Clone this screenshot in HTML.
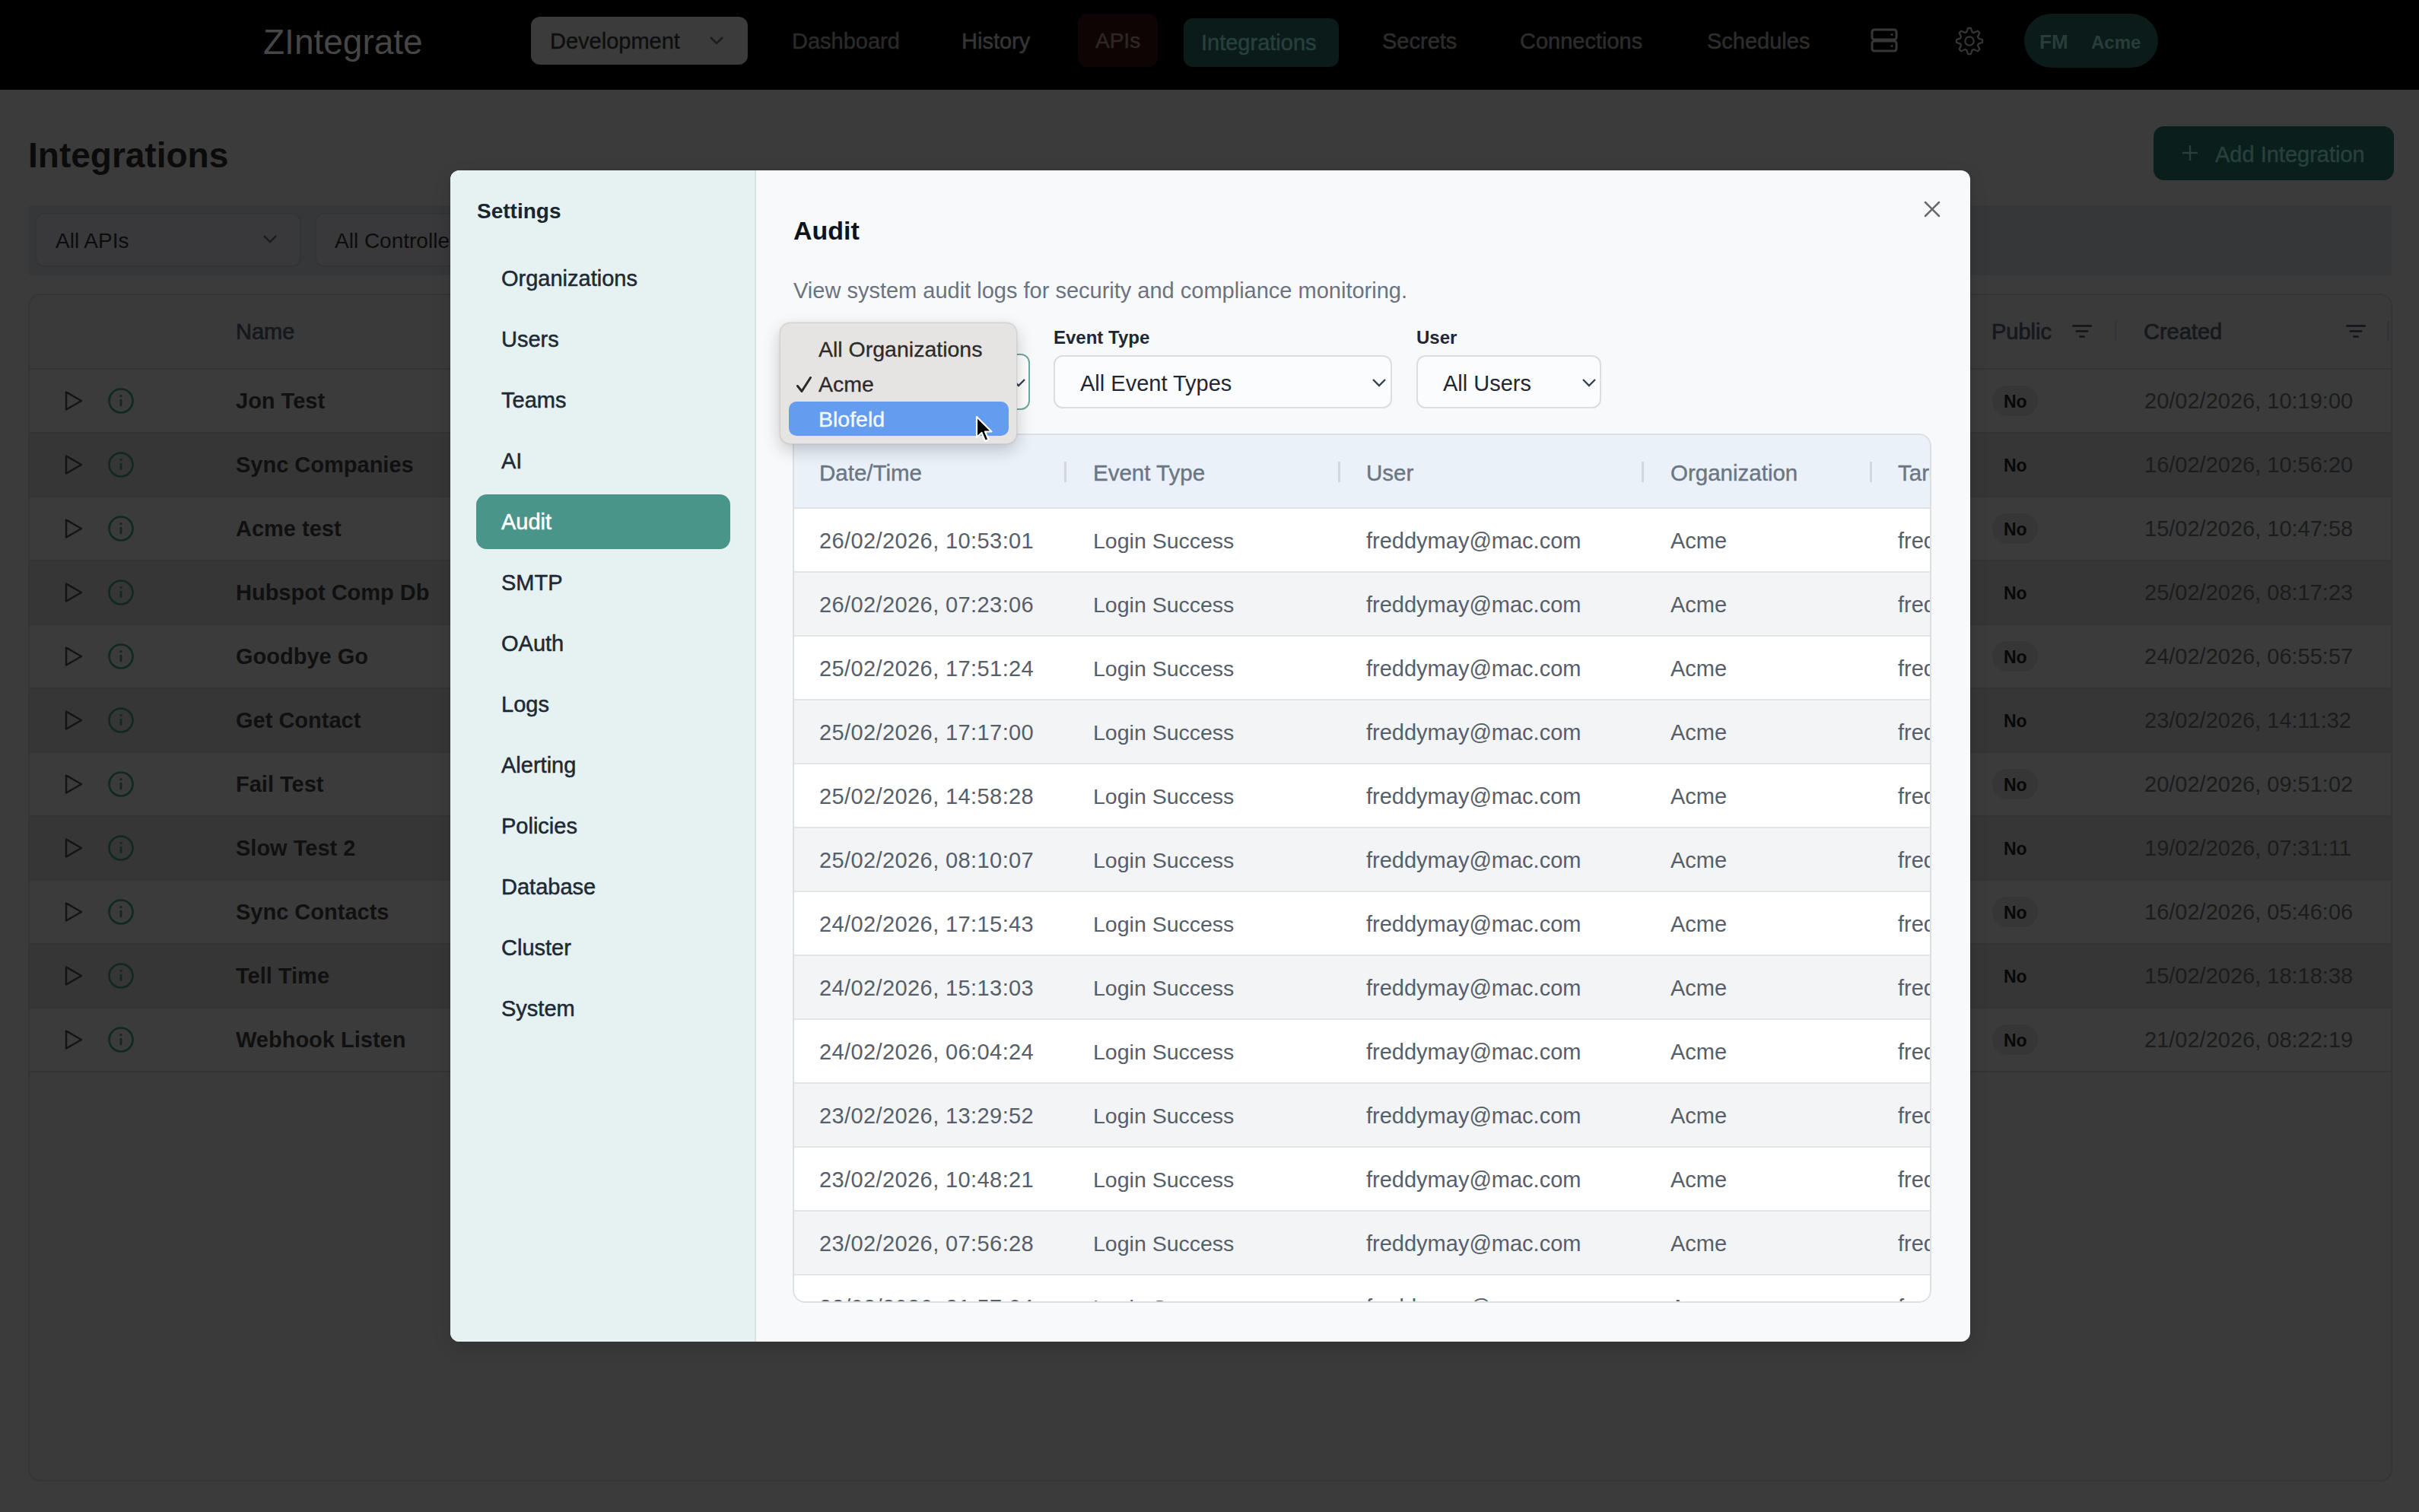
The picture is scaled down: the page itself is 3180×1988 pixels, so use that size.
<!DOCTYPE html>
<html><head><meta charset="utf-8"><style>
html,body{margin:0;padding:0;}
body{width:3180px;height:1988px;overflow:hidden;position:relative;background:#3b3b3b;font-family:"Liberation Sans",sans-serif;}
.t{position:absolute;white-space:nowrap;line-height:1;}
.b{position:absolute;}
</style></head><body>
<div class="b" style="left:0px;top:0px;width:3180px;height:118px;background:#000;"></div>
<div class="t" style="left:346px;top:32.1px;font-size:46px;color:#464646;">ZIntegrate</div>
<div class="b" style="left:698px;top:22px;width:285px;height:63px;background:#3b3b3b;border-radius:12px;"></div>
<div class="t" style="left:723px;top:39.5px;font-size:29px;color:#0e0e0e;-webkit-text-stroke:0.35px #0e0e0e;">Development</div>
<svg class="b" style="left:932px;top:46px" width="20" height="14" viewBox="0 0 20 14"><path d="M2 3 L10 11 L18 3" fill="none" stroke="#1c1c1c" stroke-width="2.6"/></svg>
<div class="t" style="left:1041px;top:39.5px;font-size:29px;color:#2a2a2a;-webkit-text-stroke:0.5px #2a2a2a;">Dashboard</div>
<div class="t" style="left:1264px;top:39.5px;font-size:29px;color:#363636;-webkit-text-stroke:0.5px #363636;">History</div>
<div class="b" style="left:1417px;top:18px;width:105px;height:70px;background:#0f0404;border-radius:12px;"></div>
<div class="t" style="left:1440px;top:40.3px;font-size:28px;color:#2e2626;-webkit-text-stroke:0.5px #2e2626;">APIs</div>
<div class="b" style="left:1556px;top:24px;width:204px;height:64px;background:#0a1b19;border-radius:12px;"></div>
<div class="t" style="left:1579px;top:41.5px;font-size:29px;color:#28403d;-webkit-text-stroke:0.5px #28403d;">Integrations</div>
<div class="t" style="left:1817px;top:39.5px;font-size:29px;color:#2d2d2d;-webkit-text-stroke:0.5px #2d2d2d;">Secrets</div>
<div class="t" style="left:1998px;top:39.5px;font-size:29px;color:#2d2d2d;-webkit-text-stroke:0.5px #2d2d2d;">Connections</div>
<div class="t" style="left:2244px;top:39.5px;font-size:29px;color:#2d2d2d;-webkit-text-stroke:0.5px #2d2d2d;">Schedules</div>
<svg class="b" style="left:2458px;top:36px" width="38" height="36" viewBox="0 0 38 36"><rect x="3" y="3" width="32" height="13" rx="3" fill="none" stroke="#363636" stroke-width="3"/><rect x="3" y="18" width="32" height="13" rx="3" fill="none" stroke="#363636" stroke-width="3"/><circle cx="29" cy="9.5" r="1.6" fill="#363636"/><circle cx="29" cy="24.5" r="1.6" fill="#363636"/></svg>
<svg class="b" style="left:2569px;top:34px" width="40" height="40" viewBox="0 0 40 40"><path fill="none" stroke="#363636" stroke-width="2.2" stroke-linejoin="round" d="M16.37 8.14 L18.20 2.89 L21.80 2.89 L23.63 8.14 L25.82 9.05 L30.82 6.63 L33.37 9.18 L30.95 14.18 L31.86 16.37 L37.11 18.20 L37.11 21.80 L31.86 23.63 L30.95 25.82 L33.37 30.82 L30.82 33.37 L25.82 30.95 L23.63 31.86 L21.80 37.11 L18.20 37.11 L16.37 31.86 L14.18 30.95 L9.18 33.37 L6.63 30.82 L9.05 25.82 L8.14 23.63 L2.89 21.80 L2.89 18.20 L8.14 16.37 L9.05 14.18 L6.63 9.18 L9.18 6.63 L14.18 9.05 Z"/><circle cx="20" cy="20" r="5.7" fill="none" stroke="#363636" stroke-width="2.2"/></svg>
<div class="b" style="left:2661px;top:18px;width:176px;height:71px;background:#0a1b19;border-radius:36px;"></div>
<div class="t" style="left:2681px;top:42.0px;font-size:26px;color:#283d3a;font-weight:700;">FM</div>
<div class="t" style="left:2749px;top:43.7px;font-size:24px;color:#283d3a;font-weight:700;">Acme</div>
<div class="t" style="left:37px;top:181.1px;font-size:46px;color:#0b0b0b;font-weight:700;">Integrations</div>
<div class="b" style="left:2831px;top:166px;width:316px;height:71px;background:#0a1e1b;border-radius:14px;"></div>
<svg class="b" style="left:2868px;top:190px" width="22" height="22" viewBox="0 0 22 22"><path d="M11 1V21M1 11H21" stroke="#27403d" stroke-width="2.4"/></svg>
<div class="t" style="left:2912px;top:188.5px;font-size:29px;color:#27403d;-webkit-text-stroke:0.5px #27403d;">Add Integration</div>
<div class="b" style="left:37px;top:270px;width:3107px;height:92px;background:#363739;border-radius:4px;"></div>
<div class="b" style="left:46px;top:280px;width:350px;height:71px;background:#39393b;border:2px solid #333436;border-radius:12px;box-sizing:border-box;"></div>
<div class="t" style="left:73px;top:303.3px;font-size:28px;color:#0c0c0c;">All APIs</div>
<svg class="b" style="left:345px;top:307px" width="20" height="14" viewBox="0 0 20 14"><path d="M2 3 L10 11 L18 3" fill="none" stroke="#1a1a1a" stroke-width="2.4"/></svg>
<div class="b" style="left:414px;top:280px;width:350px;height:71px;background:#39393b;border:2px solid #333436;border-radius:12px;box-sizing:border-box;"></div>
<div class="t" style="left:440px;top:303.3px;font-size:28px;color:#0c0c0c;">All Controllers</div>
<div class="b" style="left:37px;top:386px;width:3108px;height:1562px;background:#3a3a3b;border:2px solid #353536;border-radius:16px;box-sizing:border-box;"></div>
<div class="t" style="left:310px;top:421.5px;font-size:29px;color:#15181c;-webkit-text-stroke:0.7px #15181c;">Name</div>
<div class="t" style="left:2618px;top:421.5px;font-size:29px;color:#15181c;-webkit-text-stroke:0.7px #15181c;">Public</div>
<div class="t" style="left:2818px;top:421.5px;font-size:29px;color:#15181c;-webkit-text-stroke:0.7px #15181c;">Created</div>
<svg class="b" style="left:2723px;top:426px" width="28" height="20" viewBox="0 0 28 20"><path d="M2.5 2.5H25.5M7 9.5H21M11.5 16.5H16.5" stroke="#17191c" stroke-width="3" stroke-linecap="round"/></svg>
<svg class="b" style="left:3083px;top:426px" width="28" height="20" viewBox="0 0 28 20"><path d="M2.5 2.5H25.5M7 9.5H21M11.5 16.5H16.5" stroke="#17191c" stroke-width="3" stroke-linecap="round"/></svg>
<div class="b" style="left:2780px;top:422px;width:3px;height:26px;background:#333437;"></div>
<div class="b" style="left:3138px;top:422px;width:3px;height:26px;background:#333437;"></div>
<div class="b" style="left:39px;top:484px;width:3104px;height:2px;background:#333436;"></div>
<div class="b" style="left:39px;top:486px;width:3104px;height:82px;background:#3b3b3b;"></div>
<div class="b" style="left:39px;top:568px;width:3104px;height:2px;background:#343434;"></div>
<svg class="b" style="left:84px;top:513px" width="26" height="28" viewBox="0 0 26 28"><path d="M3 2.5 L23 14 L3 25.5 Z" fill="none" stroke="#141414" stroke-width="2.5" stroke-linejoin="round"/></svg>
<svg class="b" style="left:141px;top:509px" width="36" height="36" viewBox="0 0 36 36"><circle cx="18" cy="18" r="15.5" fill="none" stroke="#10291f" stroke-width="2.6"/><path d="M18 16V25" stroke="#10291f" stroke-width="2.6"/><circle cx="18" cy="11.5" r="1.6" fill="#10291f"/></svg>
<div class="t" style="left:310px;top:512.5px;font-size:29px;color:#101010;font-weight:700;">Jon Test</div>
<div class="b" style="left:2619px;top:507px;width:60px;height:40px;background:#363636;border-radius:20px;"></div>
<div class="t" style="left:2634px;top:516.5px;font-size:23px;color:#080808;font-weight:700;">No</div>
<div class="t" style="left:2819px;top:512.5px;font-size:29px;color:#1c1c1c;">20/02/2026, 10:19:00</div>
<div class="b" style="left:39px;top:570px;width:3104px;height:82px;background:#363636;"></div>
<div class="b" style="left:39px;top:652px;width:3104px;height:2px;background:#343434;"></div>
<svg class="b" style="left:84px;top:597px" width="26" height="28" viewBox="0 0 26 28"><path d="M3 2.5 L23 14 L3 25.5 Z" fill="none" stroke="#141414" stroke-width="2.5" stroke-linejoin="round"/></svg>
<svg class="b" style="left:141px;top:593px" width="36" height="36" viewBox="0 0 36 36"><circle cx="18" cy="18" r="15.5" fill="none" stroke="#10291f" stroke-width="2.6"/><path d="M18 16V25" stroke="#10291f" stroke-width="2.6"/><circle cx="18" cy="11.5" r="1.6" fill="#10291f"/></svg>
<div class="t" style="left:310px;top:596.5px;font-size:29px;color:#101010;font-weight:700;">Sync Companies</div>
<div class="t" style="left:2634px;top:600.5px;font-size:23px;color:#080808;font-weight:700;">No</div>
<div class="t" style="left:2819px;top:596.5px;font-size:29px;color:#1c1c1c;">16/02/2026, 10:56:20</div>
<div class="b" style="left:39px;top:654px;width:3104px;height:82px;background:#3b3b3b;"></div>
<div class="b" style="left:39px;top:736px;width:3104px;height:2px;background:#343434;"></div>
<svg class="b" style="left:84px;top:681px" width="26" height="28" viewBox="0 0 26 28"><path d="M3 2.5 L23 14 L3 25.5 Z" fill="none" stroke="#141414" stroke-width="2.5" stroke-linejoin="round"/></svg>
<svg class="b" style="left:141px;top:677px" width="36" height="36" viewBox="0 0 36 36"><circle cx="18" cy="18" r="15.5" fill="none" stroke="#10291f" stroke-width="2.6"/><path d="M18 16V25" stroke="#10291f" stroke-width="2.6"/><circle cx="18" cy="11.5" r="1.6" fill="#10291f"/></svg>
<div class="t" style="left:310px;top:680.5px;font-size:29px;color:#101010;font-weight:700;">Acme test</div>
<div class="b" style="left:2619px;top:675px;width:60px;height:40px;background:#363636;border-radius:20px;"></div>
<div class="t" style="left:2634px;top:684.5px;font-size:23px;color:#080808;font-weight:700;">No</div>
<div class="t" style="left:2819px;top:680.5px;font-size:29px;color:#1c1c1c;">15/02/2026, 10:47:58</div>
<div class="b" style="left:39px;top:738px;width:3104px;height:82px;background:#363636;"></div>
<div class="b" style="left:39px;top:820px;width:3104px;height:2px;background:#343434;"></div>
<svg class="b" style="left:84px;top:765px" width="26" height="28" viewBox="0 0 26 28"><path d="M3 2.5 L23 14 L3 25.5 Z" fill="none" stroke="#141414" stroke-width="2.5" stroke-linejoin="round"/></svg>
<svg class="b" style="left:141px;top:761px" width="36" height="36" viewBox="0 0 36 36"><circle cx="18" cy="18" r="15.5" fill="none" stroke="#10291f" stroke-width="2.6"/><path d="M18 16V25" stroke="#10291f" stroke-width="2.6"/><circle cx="18" cy="11.5" r="1.6" fill="#10291f"/></svg>
<div class="t" style="left:310px;top:764.5px;font-size:29px;color:#101010;font-weight:700;">Hubspot Comp Db</div>
<div class="t" style="left:2634px;top:768.5px;font-size:23px;color:#080808;font-weight:700;">No</div>
<div class="t" style="left:2819px;top:764.5px;font-size:29px;color:#1c1c1c;">25/02/2026, 08:17:23</div>
<div class="b" style="left:39px;top:822px;width:3104px;height:82px;background:#3b3b3b;"></div>
<div class="b" style="left:39px;top:904px;width:3104px;height:2px;background:#343434;"></div>
<svg class="b" style="left:84px;top:849px" width="26" height="28" viewBox="0 0 26 28"><path d="M3 2.5 L23 14 L3 25.5 Z" fill="none" stroke="#141414" stroke-width="2.5" stroke-linejoin="round"/></svg>
<svg class="b" style="left:141px;top:845px" width="36" height="36" viewBox="0 0 36 36"><circle cx="18" cy="18" r="15.5" fill="none" stroke="#10291f" stroke-width="2.6"/><path d="M18 16V25" stroke="#10291f" stroke-width="2.6"/><circle cx="18" cy="11.5" r="1.6" fill="#10291f"/></svg>
<div class="t" style="left:310px;top:848.5px;font-size:29px;color:#101010;font-weight:700;">Goodbye Go</div>
<div class="b" style="left:2619px;top:843px;width:60px;height:40px;background:#363636;border-radius:20px;"></div>
<div class="t" style="left:2634px;top:852.5px;font-size:23px;color:#080808;font-weight:700;">No</div>
<div class="t" style="left:2819px;top:848.5px;font-size:29px;color:#1c1c1c;">24/02/2026, 06:55:57</div>
<div class="b" style="left:39px;top:906px;width:3104px;height:82px;background:#363636;"></div>
<div class="b" style="left:39px;top:988px;width:3104px;height:2px;background:#343434;"></div>
<svg class="b" style="left:84px;top:933px" width="26" height="28" viewBox="0 0 26 28"><path d="M3 2.5 L23 14 L3 25.5 Z" fill="none" stroke="#141414" stroke-width="2.5" stroke-linejoin="round"/></svg>
<svg class="b" style="left:141px;top:929px" width="36" height="36" viewBox="0 0 36 36"><circle cx="18" cy="18" r="15.5" fill="none" stroke="#10291f" stroke-width="2.6"/><path d="M18 16V25" stroke="#10291f" stroke-width="2.6"/><circle cx="18" cy="11.5" r="1.6" fill="#10291f"/></svg>
<div class="t" style="left:310px;top:932.5px;font-size:29px;color:#101010;font-weight:700;">Get Contact</div>
<div class="t" style="left:2634px;top:936.5px;font-size:23px;color:#080808;font-weight:700;">No</div>
<div class="t" style="left:2819px;top:932.5px;font-size:29px;color:#1c1c1c;">23/02/2026, 14:11:32</div>
<div class="b" style="left:39px;top:990px;width:3104px;height:82px;background:#3b3b3b;"></div>
<div class="b" style="left:39px;top:1072px;width:3104px;height:2px;background:#343434;"></div>
<svg class="b" style="left:84px;top:1017px" width="26" height="28" viewBox="0 0 26 28"><path d="M3 2.5 L23 14 L3 25.5 Z" fill="none" stroke="#141414" stroke-width="2.5" stroke-linejoin="round"/></svg>
<svg class="b" style="left:141px;top:1013px" width="36" height="36" viewBox="0 0 36 36"><circle cx="18" cy="18" r="15.5" fill="none" stroke="#10291f" stroke-width="2.6"/><path d="M18 16V25" stroke="#10291f" stroke-width="2.6"/><circle cx="18" cy="11.5" r="1.6" fill="#10291f"/></svg>
<div class="t" style="left:310px;top:1016.5px;font-size:29px;color:#101010;font-weight:700;">Fail Test</div>
<div class="b" style="left:2619px;top:1011px;width:60px;height:40px;background:#363636;border-radius:20px;"></div>
<div class="t" style="left:2634px;top:1020.5px;font-size:23px;color:#080808;font-weight:700;">No</div>
<div class="t" style="left:2819px;top:1016.5px;font-size:29px;color:#1c1c1c;">20/02/2026, 09:51:02</div>
<div class="b" style="left:39px;top:1074px;width:3104px;height:82px;background:#363636;"></div>
<div class="b" style="left:39px;top:1156px;width:3104px;height:2px;background:#343434;"></div>
<svg class="b" style="left:84px;top:1101px" width="26" height="28" viewBox="0 0 26 28"><path d="M3 2.5 L23 14 L3 25.5 Z" fill="none" stroke="#141414" stroke-width="2.5" stroke-linejoin="round"/></svg>
<svg class="b" style="left:141px;top:1097px" width="36" height="36" viewBox="0 0 36 36"><circle cx="18" cy="18" r="15.5" fill="none" stroke="#10291f" stroke-width="2.6"/><path d="M18 16V25" stroke="#10291f" stroke-width="2.6"/><circle cx="18" cy="11.5" r="1.6" fill="#10291f"/></svg>
<div class="t" style="left:310px;top:1100.5px;font-size:29px;color:#101010;font-weight:700;">Slow Test 2</div>
<div class="t" style="left:2634px;top:1104.5px;font-size:23px;color:#080808;font-weight:700;">No</div>
<div class="t" style="left:2819px;top:1100.5px;font-size:29px;color:#1c1c1c;">19/02/2026, 07:31:11</div>
<div class="b" style="left:39px;top:1158px;width:3104px;height:82px;background:#3b3b3b;"></div>
<div class="b" style="left:39px;top:1240px;width:3104px;height:2px;background:#343434;"></div>
<svg class="b" style="left:84px;top:1185px" width="26" height="28" viewBox="0 0 26 28"><path d="M3 2.5 L23 14 L3 25.5 Z" fill="none" stroke="#141414" stroke-width="2.5" stroke-linejoin="round"/></svg>
<svg class="b" style="left:141px;top:1181px" width="36" height="36" viewBox="0 0 36 36"><circle cx="18" cy="18" r="15.5" fill="none" stroke="#10291f" stroke-width="2.6"/><path d="M18 16V25" stroke="#10291f" stroke-width="2.6"/><circle cx="18" cy="11.5" r="1.6" fill="#10291f"/></svg>
<div class="t" style="left:310px;top:1184.5px;font-size:29px;color:#101010;font-weight:700;">Sync Contacts</div>
<div class="b" style="left:2619px;top:1179px;width:60px;height:40px;background:#363636;border-radius:20px;"></div>
<div class="t" style="left:2634px;top:1188.5px;font-size:23px;color:#080808;font-weight:700;">No</div>
<div class="t" style="left:2819px;top:1184.5px;font-size:29px;color:#1c1c1c;">16/02/2026, 05:46:06</div>
<div class="b" style="left:39px;top:1242px;width:3104px;height:82px;background:#363636;"></div>
<div class="b" style="left:39px;top:1324px;width:3104px;height:2px;background:#343434;"></div>
<svg class="b" style="left:84px;top:1269px" width="26" height="28" viewBox="0 0 26 28"><path d="M3 2.5 L23 14 L3 25.5 Z" fill="none" stroke="#141414" stroke-width="2.5" stroke-linejoin="round"/></svg>
<svg class="b" style="left:141px;top:1265px" width="36" height="36" viewBox="0 0 36 36"><circle cx="18" cy="18" r="15.5" fill="none" stroke="#10291f" stroke-width="2.6"/><path d="M18 16V25" stroke="#10291f" stroke-width="2.6"/><circle cx="18" cy="11.5" r="1.6" fill="#10291f"/></svg>
<div class="t" style="left:310px;top:1268.5px;font-size:29px;color:#101010;font-weight:700;">Tell Time</div>
<div class="t" style="left:2634px;top:1272.5px;font-size:23px;color:#080808;font-weight:700;">No</div>
<div class="t" style="left:2819px;top:1268.5px;font-size:29px;color:#1c1c1c;">15/02/2026, 18:18:38</div>
<div class="b" style="left:39px;top:1326px;width:3104px;height:82px;background:#3b3b3b;"></div>
<div class="b" style="left:39px;top:1408px;width:3104px;height:2px;background:#343434;"></div>
<svg class="b" style="left:84px;top:1353px" width="26" height="28" viewBox="0 0 26 28"><path d="M3 2.5 L23 14 L3 25.5 Z" fill="none" stroke="#141414" stroke-width="2.5" stroke-linejoin="round"/></svg>
<svg class="b" style="left:141px;top:1349px" width="36" height="36" viewBox="0 0 36 36"><circle cx="18" cy="18" r="15.5" fill="none" stroke="#10291f" stroke-width="2.6"/><path d="M18 16V25" stroke="#10291f" stroke-width="2.6"/><circle cx="18" cy="11.5" r="1.6" fill="#10291f"/></svg>
<div class="t" style="left:310px;top:1352.5px;font-size:29px;color:#101010;font-weight:700;">Webhook Listen</div>
<div class="b" style="left:2619px;top:1347px;width:60px;height:40px;background:#363636;border-radius:20px;"></div>
<div class="t" style="left:2634px;top:1356.5px;font-size:23px;color:#080808;font-weight:700;">No</div>
<div class="t" style="left:2819px;top:1352.5px;font-size:29px;color:#1c1c1c;">21/02/2026, 08:22:19</div>
<div class="b" style="left:592px;top:224px;width:1998px;height:1540px;border-radius:12px;background:#f8f9fb;overflow:hidden;box-shadow:0 8px 24px rgba(0,0,0,0.12);"><div class="b" style="left:0;top:0;width:402px;height:1540px;background:#e6f2f2;border-right:2px solid #d9e3e3;box-sizing:border-box;"></div></div>
<div class="t" style="left:627px;top:264.3px;font-size:28px;color:#1b2530;font-weight:700;">Settings</div>
<div class="b" style="left:626px;top:650px;width:334px;height:72px;background:#4a958a;border-radius:14px;"></div>
<div class="t" style="left:659px;top:351.5px;font-size:29px;color:#1e2935;-webkit-text-stroke:0.5px #1e2935;">Organizations</div>
<div class="t" style="left:659px;top:431.5px;font-size:29px;color:#1e2935;-webkit-text-stroke:0.5px #1e2935;">Users</div>
<div class="t" style="left:659px;top:511.5px;font-size:29px;color:#1e2935;-webkit-text-stroke:0.5px #1e2935;">Teams</div>
<div class="t" style="left:659px;top:591.5px;font-size:29px;color:#1e2935;-webkit-text-stroke:0.5px #1e2935;">AI</div>
<div class="t" style="left:659px;top:671.5px;font-size:29px;color:#ffffff;-webkit-text-stroke:0.5px #ffffff;">Audit</div>
<div class="t" style="left:659px;top:751.5px;font-size:29px;color:#1e2935;-webkit-text-stroke:0.5px #1e2935;">SMTP</div>
<div class="t" style="left:659px;top:831.5px;font-size:29px;color:#1e2935;-webkit-text-stroke:0.5px #1e2935;">OAuth</div>
<div class="t" style="left:659px;top:911.5px;font-size:29px;color:#1e2935;-webkit-text-stroke:0.5px #1e2935;">Logs</div>
<div class="t" style="left:659px;top:991.5px;font-size:29px;color:#1e2935;-webkit-text-stroke:0.5px #1e2935;">Alerting</div>
<div class="t" style="left:659px;top:1071.5px;font-size:29px;color:#1e2935;-webkit-text-stroke:0.5px #1e2935;">Policies</div>
<div class="t" style="left:659px;top:1151.5px;font-size:29px;color:#1e2935;-webkit-text-stroke:0.5px #1e2935;">Database</div>
<div class="t" style="left:659px;top:1231.5px;font-size:29px;color:#1e2935;-webkit-text-stroke:0.5px #1e2935;">Cluster</div>
<div class="t" style="left:659px;top:1311.5px;font-size:29px;color:#1e2935;-webkit-text-stroke:0.5px #1e2935;">System</div>
<div class="t" style="left:1043px;top:286.2px;font-size:34px;color:#0f141c;font-weight:700;">Audit</div>
<div class="t" style="left:1043px;top:367.5px;font-size:29px;color:#6b7280;">View system audit logs for security and compliance monitoring.</div>
<div class="t" style="left:1385px;top:431.7px;font-size:24px;color:#1f2733;font-weight:700;">Event Type</div>
<div class="t" style="left:1862px;top:431.7px;font-size:24px;color:#1f2733;font-weight:700;">User</div>
<div class="b" style="left:1043px;top:465px;width:311px;height:74px;background:#ffffff;border:2px solid #6fa9a0;border-radius:12px;box-sizing:border-box;"></div>
<svg class="b" style="left:1329px;top:496px" width="20" height="14" viewBox="0 0 20 14"><path d="M2 3 L10 11 L18 3" fill="none" stroke="#374151" stroke-width="2.4"/></svg>
<div class="b" style="left:1385px;top:467px;width:445px;height:70px;background:#fbfcfd;border:2px solid #dadde2;border-radius:12px;box-sizing:border-box;"></div>
<div class="t" style="left:1420px;top:489.5px;font-size:29px;color:#1f2733;">All Event Types</div>
<svg class="b" style="left:1803px;top:496px" width="20" height="14" viewBox="0 0 20 14"><path d="M2 3 L10 11 L18 3" fill="none" stroke="#374151" stroke-width="2.4"/></svg>
<div class="b" style="left:1862px;top:467px;width:243px;height:70px;background:#fbfcfd;border:2px solid #dadde2;border-radius:12px;box-sizing:border-box;"></div>
<div class="t" style="left:1897px;top:489.5px;font-size:29px;color:#1f2733;">All Users</div>
<svg class="b" style="left:2079px;top:496px" width="20" height="14" viewBox="0 0 20 14"><path d="M2 3 L10 11 L18 3" fill="none" stroke="#374151" stroke-width="2.4"/></svg>
<div class="b" style="left:1042px;top:570px;width:1497px;height:1143px;border-radius:16px;overflow:hidden;"><div class="b" style="left:0px;top:0px;width:1497px;height:99px;background:#eaf1f8;"></div><div class="b" style="left:0px;top:97px;width:1497px;height:2px;background:#dfe3e8;"></div><div class="t" style="left:35px;top:37.0px;font-size:29.5px;color:#6b7685;letter-spacing:0px;-webkit-text-stroke:0.4px #6b7685;">Date/Time</div><div class="t" style="left:395px;top:37.0px;font-size:29.5px;color:#6b7685;letter-spacing:0px;-webkit-text-stroke:0.4px #6b7685;">Event Type</div><div class="t" style="left:754px;top:37.0px;font-size:29.5px;color:#6b7685;letter-spacing:0px;-webkit-text-stroke:0.4px #6b7685;">User</div><div class="t" style="left:1154px;top:37.0px;font-size:29.5px;color:#6b7685;letter-spacing:0px;-webkit-text-stroke:0.4px #6b7685;">Organization</div><div class="t" style="left:1453px;top:37.0px;font-size:29.5px;color:#6b7685;letter-spacing:0px;-webkit-text-stroke:0.4px #6b7685;">Target</div><div class="b" style="left:357px;top:37px;width:3px;height:27px;background:#d3d8de;"></div><div class="b" style="left:717px;top:37px;width:3px;height:27px;background:#d3d8de;"></div><div class="b" style="left:1116px;top:37px;width:3px;height:27px;background:#d3d8de;"></div><div class="b" style="left:1416px;top:37px;width:3px;height:27px;background:#d3d8de;"></div><div class="b" style="left:0px;top:99px;width:1497px;height:82px;background:#ffffff;"></div><div class="b" style="left:0px;top:181px;width:1497px;height:2px;background:#e3e5e9;"></div><div class="t" style="left:35px;top:126.5px;font-size:29px;color:#565e69;letter-spacing:0.4px;">26/02/2026, 10:53:01</div><div class="t" style="left:395px;top:126.9px;font-size:28.5px;color:#565e69;letter-spacing:0px;">Login Success</div><div class="t" style="left:754px;top:126.5px;font-size:29px;color:#565e69;letter-spacing:0px;">freddymay@mac.com</div><div class="t" style="left:1154px;top:126.5px;font-size:29px;color:#565e69;letter-spacing:0px;">Acme</div><div class="t" style="left:1453px;top:126.5px;font-size:29px;color:#565e69;letter-spacing:0px;">freddymay@mac.com</div><div class="b" style="left:0px;top:183px;width:1497px;height:82px;background:#f3f4f6;"></div><div class="b" style="left:0px;top:265px;width:1497px;height:2px;background:#e3e5e9;"></div><div class="t" style="left:35px;top:210.5px;font-size:29px;color:#565e69;letter-spacing:0.4px;">26/02/2026, 07:23:06</div><div class="t" style="left:395px;top:210.9px;font-size:28.5px;color:#565e69;letter-spacing:0px;">Login Success</div><div class="t" style="left:754px;top:210.5px;font-size:29px;color:#565e69;letter-spacing:0px;">freddymay@mac.com</div><div class="t" style="left:1154px;top:210.5px;font-size:29px;color:#565e69;letter-spacing:0px;">Acme</div><div class="t" style="left:1453px;top:210.5px;font-size:29px;color:#565e69;letter-spacing:0px;">freddymay@mac.com</div><div class="b" style="left:0px;top:267px;width:1497px;height:82px;background:#ffffff;"></div><div class="b" style="left:0px;top:349px;width:1497px;height:2px;background:#e3e5e9;"></div><div class="t" style="left:35px;top:294.5px;font-size:29px;color:#565e69;letter-spacing:0.4px;">25/02/2026, 17:51:24</div><div class="t" style="left:395px;top:294.9px;font-size:28.5px;color:#565e69;letter-spacing:0px;">Login Success</div><div class="t" style="left:754px;top:294.5px;font-size:29px;color:#565e69;letter-spacing:0px;">freddymay@mac.com</div><div class="t" style="left:1154px;top:294.5px;font-size:29px;color:#565e69;letter-spacing:0px;">Acme</div><div class="t" style="left:1453px;top:294.5px;font-size:29px;color:#565e69;letter-spacing:0px;">freddymay@mac.com</div><div class="b" style="left:0px;top:351px;width:1497px;height:82px;background:#f3f4f6;"></div><div class="b" style="left:0px;top:433px;width:1497px;height:2px;background:#e3e5e9;"></div><div class="t" style="left:35px;top:378.5px;font-size:29px;color:#565e69;letter-spacing:0.4px;">25/02/2026, 17:17:00</div><div class="t" style="left:395px;top:378.9px;font-size:28.5px;color:#565e69;letter-spacing:0px;">Login Success</div><div class="t" style="left:754px;top:378.5px;font-size:29px;color:#565e69;letter-spacing:0px;">freddymay@mac.com</div><div class="t" style="left:1154px;top:378.5px;font-size:29px;color:#565e69;letter-spacing:0px;">Acme</div><div class="t" style="left:1453px;top:378.5px;font-size:29px;color:#565e69;letter-spacing:0px;">freddymay@mac.com</div><div class="b" style="left:0px;top:435px;width:1497px;height:82px;background:#ffffff;"></div><div class="b" style="left:0px;top:517px;width:1497px;height:2px;background:#e3e5e9;"></div><div class="t" style="left:35px;top:462.5px;font-size:29px;color:#565e69;letter-spacing:0.4px;">25/02/2026, 14:58:28</div><div class="t" style="left:395px;top:462.9px;font-size:28.5px;color:#565e69;letter-spacing:0px;">Login Success</div><div class="t" style="left:754px;top:462.5px;font-size:29px;color:#565e69;letter-spacing:0px;">freddymay@mac.com</div><div class="t" style="left:1154px;top:462.5px;font-size:29px;color:#565e69;letter-spacing:0px;">Acme</div><div class="t" style="left:1453px;top:462.5px;font-size:29px;color:#565e69;letter-spacing:0px;">freddymay@mac.com</div><div class="b" style="left:0px;top:519px;width:1497px;height:82px;background:#f3f4f6;"></div><div class="b" style="left:0px;top:601px;width:1497px;height:2px;background:#e3e5e9;"></div><div class="t" style="left:35px;top:546.5px;font-size:29px;color:#565e69;letter-spacing:0.4px;">25/02/2026, 08:10:07</div><div class="t" style="left:395px;top:546.9px;font-size:28.5px;color:#565e69;letter-spacing:0px;">Login Success</div><div class="t" style="left:754px;top:546.5px;font-size:29px;color:#565e69;letter-spacing:0px;">freddymay@mac.com</div><div class="t" style="left:1154px;top:546.5px;font-size:29px;color:#565e69;letter-spacing:0px;">Acme</div><div class="t" style="left:1453px;top:546.5px;font-size:29px;color:#565e69;letter-spacing:0px;">freddymay@mac.com</div><div class="b" style="left:0px;top:603px;width:1497px;height:82px;background:#ffffff;"></div><div class="b" style="left:0px;top:685px;width:1497px;height:2px;background:#e3e5e9;"></div><div class="t" style="left:35px;top:630.5px;font-size:29px;color:#565e69;letter-spacing:0.4px;">24/02/2026, 17:15:43</div><div class="t" style="left:395px;top:630.9px;font-size:28.5px;color:#565e69;letter-spacing:0px;">Login Success</div><div class="t" style="left:754px;top:630.5px;font-size:29px;color:#565e69;letter-spacing:0px;">freddymay@mac.com</div><div class="t" style="left:1154px;top:630.5px;font-size:29px;color:#565e69;letter-spacing:0px;">Acme</div><div class="t" style="left:1453px;top:630.5px;font-size:29px;color:#565e69;letter-spacing:0px;">freddymay@mac.com</div><div class="b" style="left:0px;top:687px;width:1497px;height:82px;background:#f3f4f6;"></div><div class="b" style="left:0px;top:769px;width:1497px;height:2px;background:#e3e5e9;"></div><div class="t" style="left:35px;top:714.5px;font-size:29px;color:#565e69;letter-spacing:0.4px;">24/02/2026, 15:13:03</div><div class="t" style="left:395px;top:714.9px;font-size:28.5px;color:#565e69;letter-spacing:0px;">Login Success</div><div class="t" style="left:754px;top:714.5px;font-size:29px;color:#565e69;letter-spacing:0px;">freddymay@mac.com</div><div class="t" style="left:1154px;top:714.5px;font-size:29px;color:#565e69;letter-spacing:0px;">Acme</div><div class="t" style="left:1453px;top:714.5px;font-size:29px;color:#565e69;letter-spacing:0px;">freddymay@mac.com</div><div class="b" style="left:0px;top:771px;width:1497px;height:82px;background:#ffffff;"></div><div class="b" style="left:0px;top:853px;width:1497px;height:2px;background:#e3e5e9;"></div><div class="t" style="left:35px;top:798.5px;font-size:29px;color:#565e69;letter-spacing:0.4px;">24/02/2026, 06:04:24</div><div class="t" style="left:395px;top:798.9px;font-size:28.5px;color:#565e69;letter-spacing:0px;">Login Success</div><div class="t" style="left:754px;top:798.5px;font-size:29px;color:#565e69;letter-spacing:0px;">freddymay@mac.com</div><div class="t" style="left:1154px;top:798.5px;font-size:29px;color:#565e69;letter-spacing:0px;">Acme</div><div class="t" style="left:1453px;top:798.5px;font-size:29px;color:#565e69;letter-spacing:0px;">freddymay@mac.com</div><div class="b" style="left:0px;top:855px;width:1497px;height:82px;background:#f3f4f6;"></div><div class="b" style="left:0px;top:937px;width:1497px;height:2px;background:#e3e5e9;"></div><div class="t" style="left:35px;top:882.5px;font-size:29px;color:#565e69;letter-spacing:0.4px;">23/02/2026, 13:29:52</div><div class="t" style="left:395px;top:882.9px;font-size:28.5px;color:#565e69;letter-spacing:0px;">Login Success</div><div class="t" style="left:754px;top:882.5px;font-size:29px;color:#565e69;letter-spacing:0px;">freddymay@mac.com</div><div class="t" style="left:1154px;top:882.5px;font-size:29px;color:#565e69;letter-spacing:0px;">Acme</div><div class="t" style="left:1453px;top:882.5px;font-size:29px;color:#565e69;letter-spacing:0px;">freddymay@mac.com</div><div class="b" style="left:0px;top:939px;width:1497px;height:82px;background:#ffffff;"></div><div class="b" style="left:0px;top:1021px;width:1497px;height:2px;background:#e3e5e9;"></div><div class="t" style="left:35px;top:966.5px;font-size:29px;color:#565e69;letter-spacing:0.4px;">23/02/2026, 10:48:21</div><div class="t" style="left:395px;top:966.9px;font-size:28.5px;color:#565e69;letter-spacing:0px;">Login Success</div><div class="t" style="left:754px;top:966.5px;font-size:29px;color:#565e69;letter-spacing:0px;">freddymay@mac.com</div><div class="t" style="left:1154px;top:966.5px;font-size:29px;color:#565e69;letter-spacing:0px;">Acme</div><div class="t" style="left:1453px;top:966.5px;font-size:29px;color:#565e69;letter-spacing:0px;">freddymay@mac.com</div><div class="b" style="left:0px;top:1023px;width:1497px;height:82px;background:#f3f4f6;"></div><div class="b" style="left:0px;top:1105px;width:1497px;height:2px;background:#e3e5e9;"></div><div class="t" style="left:35px;top:1050.5px;font-size:29px;color:#565e69;letter-spacing:0.4px;">23/02/2026, 07:56:28</div><div class="t" style="left:395px;top:1050.9px;font-size:28.5px;color:#565e69;letter-spacing:0px;">Login Success</div><div class="t" style="left:754px;top:1050.5px;font-size:29px;color:#565e69;letter-spacing:0px;">freddymay@mac.com</div><div class="t" style="left:1154px;top:1050.5px;font-size:29px;color:#565e69;letter-spacing:0px;">Acme</div><div class="t" style="left:1453px;top:1050.5px;font-size:29px;color:#565e69;letter-spacing:0px;">freddymay@mac.com</div><div class="b" style="left:0px;top:1107px;width:1497px;height:82px;background:#ffffff;"></div><div class="b" style="left:0px;top:1189px;width:1497px;height:2px;background:#e3e5e9;"></div><div class="t" style="left:35px;top:1134.5px;font-size:29px;color:#565e69;letter-spacing:0.4px;">22/02/2026, 21:57:04</div><div class="t" style="left:395px;top:1134.9px;font-size:28.5px;color:#565e69;letter-spacing:0px;">Login Success</div><div class="t" style="left:754px;top:1134.5px;font-size:29px;color:#565e69;letter-spacing:0px;">freddymay@mac.com</div><div class="t" style="left:1154px;top:1134.5px;font-size:29px;color:#565e69;letter-spacing:0px;">Acme</div><div class="t" style="left:1453px;top:1134.5px;font-size:29px;color:#565e69;letter-spacing:0px;">freddymay@mac.com</div><div class="b" style="left:0;top:0;width:1497px;height:1143px;border:2px solid #dcdfe4;border-radius:16px;box-sizing:border-box;"></div></div>
<svg class="b" style="left:2528px;top:263px" width="24" height="24" viewBox="0 0 24 24"><path d="M3 3L21 21M21 3L3 21" stroke="#68696c" stroke-width="2.5" stroke-linecap="round"/></svg>
<div class="b" style="left:1025px;top:424px;width:312px;height:160px;background:#e5e4e2;border:1px solid #d2d1cf;border-radius:14px;box-sizing:border-box;box-shadow:0 8px 22px rgba(0,0,0,0.2),0 0 2px rgba(0,0,0,0.15);"></div>
<div class="t" style="left:1076px;top:444.9px;font-size:28.5px;color:#2b2b2b;-webkit-text-stroke:0.3px #2b2b2b;">All Organizations</div>
<svg class="b" style="left:1046px;top:494px" width="22" height="24" viewBox="0 0 22 24"><path d="M2.5 13.5 L8 20.5 L19.5 2.5" fill="none" stroke="#2a2a2a" stroke-width="3" stroke-linecap="round" stroke-linejoin="round"/></svg>
<div class="t" style="left:1076px;top:490.9px;font-size:28.5px;color:#2b2b2b;-webkit-text-stroke:0.3px #2b2b2b;">Acme</div>
<div class="b" style="left:1037px;top:528px;width:289px;height:45px;background:#649cf0;border-radius:10px;"></div>
<div class="t" style="left:1076px;top:536.9px;font-size:28.5px;color:#f4f8ff;-webkit-text-stroke:0.4px #f4f8ff;">Blofeld</div>
<svg class="b" style="left:1281px;top:545px" width="26" height="40" viewBox="0 0 26 40"><path d="M3 3 L3 30 L9.5 24 L14 35 L18.5 33 L14 22.5 L22.5 22.5 Z" fill="#000" stroke="#fff" stroke-width="2.2" stroke-linejoin="round"/></svg>
</body></html>
